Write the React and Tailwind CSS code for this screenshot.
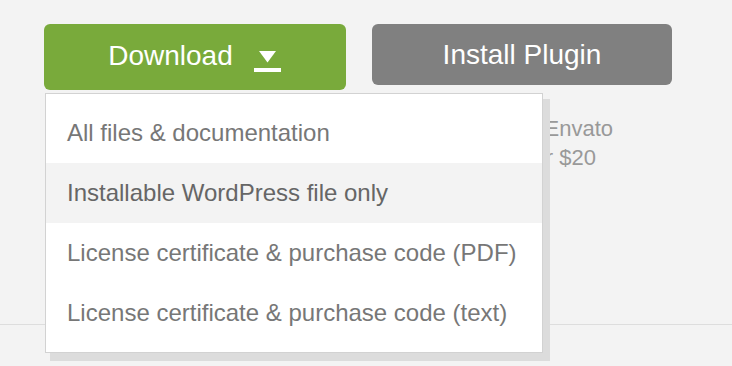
const options = [
  "All files & documentation",
  "Installable WordPress file only",
  "License certificate & purchase code (PDF)",
  "License certificate & purchase code (text)",
];

function DownloadArrow() {
  return (
    <svg width="28" height="21" viewBox="0 0 28 21" className="mt-[11px] shrink-0" fill="#ffffff">
      <polygon points="5,0 22,0 13.5,11.5" />
      <rect x="0" y="17" width="27" height="4" />
    </svg>
  );
}

export default function App() {
  const active = 1;

  return (
    <div className="min-h-screen overflow-hidden bg-[#f3f3f3] font-['Liberation_Sans',Arial,sans-serif]">
      <div className="flex items-start gap-[26px] pl-[44px] pt-[24px]">
        <div className="relative">
          <button
            type="button"
            className="flex h-[66px] w-[302px] items-center justify-center gap-[21px] rounded-[6px] bg-[#79aa3b] pb-[2px] text-[28px] leading-none text-white"
          >
            <span>Download</span>
            <DownloadArrow />
          </button>

          <div className="absolute left-[1px] top-[69px] z-10 w-[498px] border border-[#d2d2d2] bg-white py-[9px] shadow-[6px_7px_0_1px_#dcdcdc]">
            {options.map((label, i) => (
              <div
                key={label}
                className={`flex h-[60px] items-center px-[21px] text-[24px] ${
                  i === active ? "bg-[#f3f3f3] text-[#666666]" : "text-[#777777]"
                }`}
              >
                {label}
              </div>
            ))}
          </div>
        </div>

        <div className="flex flex-col">
          <button
            type="button"
            className="flex h-[61px] w-[300px] items-center justify-center rounded-[6px] bg-[#808080] text-[28px] leading-none text-white"
          >
            Install Plugin
          </button>
          <div className="mt-[29px] text-[22px] leading-[29px] text-[#999999]">
            <div className="w-[241px] text-right">Also available on Envato</div>
            <div className="w-[224px] text-right">Market for $20</div>
          </div>
        </div>
      </div>

      <div className="mt-[152px] border-t border-[#dddddd]" />
    </div>
  );
}
